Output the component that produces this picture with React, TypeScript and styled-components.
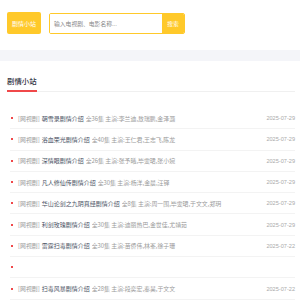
import React from "react";
import styled, { createGlobalStyle } from "styled-components";

const Global = createGlobalStyle`
  html, body { margin: 0; padding: 0; background: #fff; }
  body { font-family: "Noto Sans CJK SC", "Noto Sans", sans-serif; }
  * { box-sizing: border-box; }
`;

const Header = styled.header`
  display: flex;
  align-items: center;
  gap: 8px;
  height: 50px;
  padding: 0 7px 4px;
`;

const Logo = styled.div`
  width: 34px;
  height: 22px;
  background: #ffc92a;
  border-radius: 2px;
  color: #fff;
  font-size: 6px;
  display: flex;
  align-items: center;
  justify-content: center;
`;

const SearchBox = styled.div`
  display: flex;
  height: 21px;
  width: 136px;
  border: 1.5px solid #ffc92a;
  border-radius: 2px;
  overflow: hidden;
`;

const Input = styled.div`
  flex: 1;
  background: #fff;
  color: #888;
  font-size: 5.8px;
  display: flex;
  align-items: center;
  padding-left: 4px;
`;

const SearchBtn = styled.div`
  width: 22px;
  background: #ffc92a;
  color: #fff;
  font-size: 5.8px;
  display: flex;
  align-items: center;
  justify-content: center;
`;

const Band = styled.div`
  height: 11px;
  background: #f4f5f9;
`;

const Section = styled.section`
  padding: 11px 5px 0 7px;
`;

const TitleBar = styled.div`
  border-bottom: 1px solid #f0f0f0;
  display: flex;
`;

const Title = styled.h2`
  margin: 0;
  font-size: 7.4px;
  font-weight: 500;
  color: #334;
  line-height: 18px;
  border-bottom: 2px solid #f0484a;
  margin-bottom: -1px;
`;

const List = styled.ul`
  list-style: none;
  margin: 16px 0 0 3px;
  padding: 0;
`;

const Row = styled.li`
  height: 21.3px;
  display: flex;
  align-items: center;
  border-bottom: 1px solid #f3f3f3;
  font-size: 5.9px;
  white-space: nowrap;
`;

const Dot = styled.span`
  width: 2px;
  height: 2px;
  background: #f0484a;
  margin: 0 5px 0 1px;
  flex: none;
`;

const Tag = styled.span`
  color: #999;
  margin-right: 2px;
`;

const Name = styled.span`
  color: #4a5264;
  font-size: 6px;
  margin-right: 2px;
`;

const Meta = styled.span`
  color: #9a9a9a;
  flex: 1;
  overflow: hidden;
`;

const Date = styled.span`
  color: #aaa;
  font-family: "Liberation Sans", sans-serif;
  font-size: 5.6px;
  margin-left: auto;
`;

type Item = { name?: string; meta?: string; date?: string };

const items: Item[] = [
  { name: "朝雪录剧情介绍", meta: "全36集 主演:李兰迪,敖瑞鹏,金泽灏", date: "2025-07-29" },
  { name: "浴血荣光剧情介绍", meta: "全40集 主演:王仁君,王志飞,陈龙", date: "2025-07-29" },
  { name: "深情眼剧情介绍", meta: "全26集 主演:张予曦,毕雯珺,张小婉", date: "2025-07-29" },
  { name: "凡人修仙传剧情介绍", meta: "全30集 主演:杨洋,金晨,汪铎", date: "2025-07-29" },
  { name: "华山论剑之九阴真经剧情介绍", meta: "全8集 主演:周一围,毕雯珺,于文文,郑玥", date: "2025-07-29" },
  { name: "利剑玫瑰剧情介绍", meta: "全30集 主演:迪丽热巴,金世佳,尤靖茹", date: "2025-07-29" },
  { name: "雷霆扫毒剧情介绍", meta: "全30集 主演:苗侨伟,林峯,徐子珊", date: "2025-07-22" },
  {},
  { name: "扫毒风暴剧情介绍", meta: "全28集 主演:段奕宏,秦昊,于文文", date: "2025-07-22" },
];

export default function App() {
  return (
    <>
      <Global />
      <Header>
        <Logo>剧情小站</Logo>
        <SearchBox>
          <Input>输入电视剧、电影名称...</Input>
          <SearchBtn>搜索</SearchBtn>
        </SearchBox>
      </Header>
      <Band />
      <Section>
        <TitleBar>
          <Title>剧情小站</Title>
        </TitleBar>
        <List>
          {items.map((it, i) => (
            <Row key={i}>
              <Dot />
              {it.name && (
                <>
                  <Tag>[网视剧]</Tag>
                  <Name>{it.name}</Name>
                  <Meta>{it.meta}</Meta>
                </>
              )}
              {it.date && <Date>{it.date}</Date>}
            </Row>
          ))}
        </List>
      </Section>
    </>
  );
}
